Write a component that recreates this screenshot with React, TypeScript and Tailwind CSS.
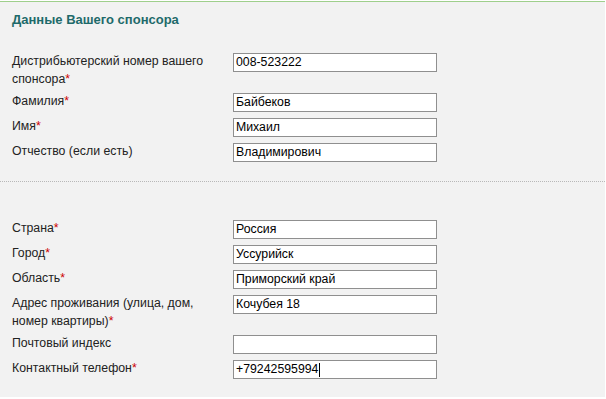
import React from "react";

const Star = () => <span className="text-[#cc0000]">*</span>;

type RowProps = { label: React.ReactNode; value: string; tall?: boolean; caret?: boolean };

function Row({ label, value, tall, caret }: RowProps) {
  return (
    <div className={`flex items-start ${tall ? "h-[34px]" : "h-[19px]"}`}>
      <div className="w-[233px] shrink-0 pl-[12px] -mt-px leading-[18px] text-[12.3px] text-[#222]">{label}</div>
      <div className="relative w-[204px] h-[19px] border border-[#8f8f8f] bg-white">
        <div className="pl-[2px] leading-[17px] text-[12.3px] text-black whitespace-nowrap flex items-center h-full">
          <span>{value}</span>
          {caret && <span className="inline-block w-px h-[14px] bg-black ml-px" />}
        </div>
      </div>
    </div>
  );
}

export default function App() {
  return (
    <div
      className="w-[606px] h-[399px] bg-white overflow-hidden"
      style={{ fontFamily: '"Liberation Sans", Arial, sans-serif' }}
    >
      <div className="mt-px w-[605px] h-[396px] bg-[#f2f2f2] border-t border-[#9fcf8c]">
        <div className="pl-[12px] pt-[10px] h-[26px] leading-[16px] text-[13px] font-bold text-[#1e6a6a]">
          Данные Вашего спонсора
        </div>
        <div className="mt-[25px] flex flex-col gap-[6px]">
          <Row tall label={<>Дистрибьютерский номер вашего<br />спонсора<Star /></>} value="008-523222" />
          <Row label={<>Фамилия<Star /></>} value="Байбеков" />
          <Row label={<>Имя<Star /></>} value="Михаил" />
          <Row label="Отчество (если есть)" value="Владимирович" />
        </div>
        <div className="mt-[19px] border-t border-dotted border-[#b8b8b8]" />
        <div className="mt-[38px] flex flex-col gap-[6px]">
          <Row label={<>Страна<Star /></>} value="Россия" />
          <Row label={<>Город<Star /></>} value="Уссурийск" />
          <Row label={<>Область<Star /></>} value="Приморский край" />
          <Row tall label={<>Адрес проживания (улица, дом,<br />номер квартиры)<Star /></>} value="Кочубея 18" />
          <Row label="Почтовый индекс" value="" />
          <Row label={<>Контактный телефон<Star /></>} value="+79242595994" caret />
        </div>
      </div>
    </div>
  );
}
